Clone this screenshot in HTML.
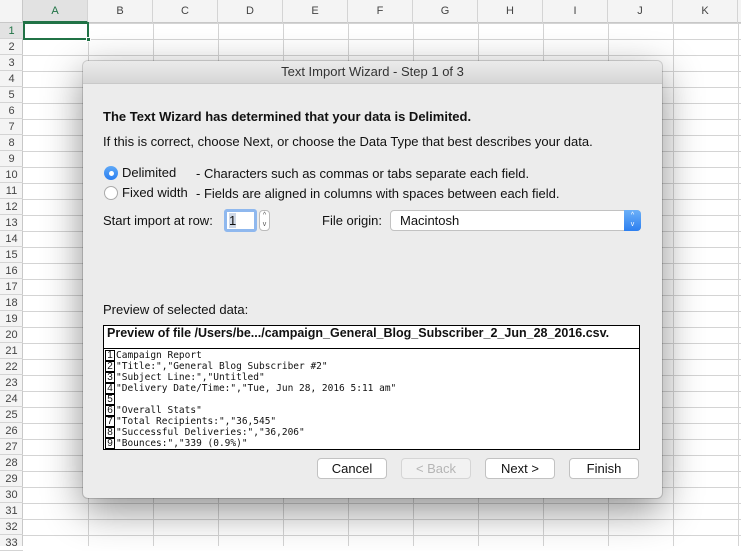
<!DOCTYPE html>
<html><head><style>
*{margin:0;padding:0;box-sizing:border-box}
body{width:741px;height:546px;overflow:hidden;background:#fff;font-family:"Liberation Sans",sans-serif;position:relative}
.grid{position:absolute;left:0;top:0;width:741px;height:546px;
background-image:repeating-linear-gradient(to right,transparent 0 64px,#d4d4d4 64px 65px),repeating-linear-gradient(to bottom,transparent 0 15px,#d4d4d4 15px 16px);
background-position:24px 0,0 8px;}
.hdr{position:absolute;left:0;top:0;width:741px;height:23px;background:#f4f4f4;border-bottom:1px solid #c8c8c8}
.rh{position:absolute;left:0;top:23px;width:23px;height:523px;background:#f4f4f4;border-right:1px solid #c8c8c8}
.col{position:absolute;top:0;height:23px;width:65px;text-align:center;font-size:11px;line-height:23px;color:#444;border-right:1px solid #d4d4d4}
.row{position:absolute;left:0;width:23px;height:16px;text-align:center;font-size:11px;line-height:16px;color:#444;border-bottom:1px solid #d4d4d4}
.dlg{position:absolute;left:83px;top:61px;width:579px;height:437px;background:#ececec;border-radius:5px;box-shadow:0 12px 40px rgba(0,0,0,.45),0 0 0 1px rgba(0,0,0,.15);font-size:13px;color:#111}
.tb{height:23px;border-bottom:1px solid #c9c9c9;background:linear-gradient(#ebebeb,#d6d6d6);border-radius:5px 5px 0 0;text-align:center;line-height:22px;font-size:13px;color:#333}
.a{position:absolute;white-space:nowrap}
.btn{position:absolute;top:397px;height:21px;width:70px;background:#fff;border:1px solid #c2c2c2;border-radius:4px;text-align:center;line-height:19px;font-size:13px}
.pv{position:absolute;left:20px;top:264px;width:537px;height:125px;background:#fff;border:1px solid #000;overflow:hidden}
.pl{font-family:"DejaVu Sans Mono","Liberation Mono",monospace;font-size:9.5px;height:11px;line-height:11px;white-space:nowrap}
.pl b{display:inline-block;border:1px solid #000;width:10px;height:11px;line-height:10px;font-weight:normal;text-align:center;margin-right:1px;font-family:"Liberation Sans",sans-serif;font-size:10px;vertical-align:top}
</style></head><body>
<div class="grid"></div>
<div class="hdr"></div>
<div class="rh"></div>
<div style="position:absolute;left:0;top:0;width:23px;height:23px;background:#f4f4f4;border-right:1px solid #c8c8c8;border-bottom:1px solid #c8c8c8"></div>
<div class="col" style="left:23px;color:#217346;background:#e2e2e2;border-bottom:2px solid #217346">A</div>
<div class="col" style="left:88px">B</div><div class="col" style="left:153px">C</div><div class="col" style="left:218px">D</div><div class="col" style="left:283px">E</div><div class="col" style="left:348px">F</div><div class="col" style="left:413px">G</div><div class="col" style="left:478px">H</div><div class="col" style="left:543px">I</div><div class="col" style="left:608px">J</div><div class="col" style="left:673px">K</div>
<div id="rows"></div>
<script>
var h='';for(var i=1;i<=33;i++){h+='<div class="row" style="top:'+(23+(i-1)*16)+'px;'+(i==1?'color:#217346;background:#e2e2e2;':'')+'">'+i+'</div>';}
document.getElementById('rows').innerHTML=h;
</script>
<div style="position:absolute;left:23px;top:22px;width:66px;height:18px;border:2px solid #217346"></div>
<div style="position:absolute;left:86px;top:37px;width:5px;height:5px;background:#217346;border:1px solid #fff"></div>

<div class="dlg">
<div class="tb">Text Import Wizard - Step 1 of 3</div>
<div class="a" style="left:20px;top:48px;font-weight:bold">The Text Wizard has determined that your data is Delimited.</div>
<div class="a" style="left:20px;top:73px">If this is correct, choose Next, or choose the Data Type that best describes your data.</div>
<div class="a" style="left:21px;top:105px;width:14px;height:14px;border-radius:50%;background:linear-gradient(#5fa8f7,#2a7ef0);"><div style="position:absolute;left:4.5px;top:4.5px;width:5px;height:5px;border-radius:50%;background:#fff"></div></div>
<div class="a" style="left:39px;top:104px">Delimited</div>
<div class="a" style="left:113px;top:105px">- Characters such as commas or tabs separate each field.</div>
<div class="a" style="left:21px;top:125px;width:14px;height:14px;border-radius:50%;background:#fff;border:1px solid #aaa"></div>
<div class="a" style="left:39px;top:124px">Fixed width</div>
<div class="a" style="left:113px;top:125px">- Fields are aligned in columns with spaces between each field.</div>
<div class="a" style="left:20px;top:152px">Start import at row:</div>
<div class="a" style="left:141px;top:148px;width:33px;height:23px;border:3px solid #8fb8ee;border-radius:3px;background:#fff;padding-left:2px;line-height:17px"><span style="background:#cfd8e6">1</span></div>
<div class="a" style="left:176px;top:149px;width:11px;height:21px;border:1px solid #bbb;border-radius:4px;background:#fff;font-size:7px;line-height:9px;text-align:center;color:#555">^<br>v</div>
<div class="a" style="left:239px;top:152px">File origin:</div>
<div class="a" style="left:307px;top:149px;width:251px;height:21px;border:1px solid #c2c2c2;border-radius:4px;background:#fff;padding-left:9px;line-height:19px">Macintosh
<div style="position:absolute;right:-1px;top:-1px;width:17px;height:21px;border-radius:0 4px 4px 0;background:linear-gradient(#6bb0f8,#2c7ff0);color:#fff;font-size:7px;line-height:9px;text-align:center;padding-top:1px">^<br>v</div></div>
<div class="a" style="left:20px;top:241px">Preview of selected data:</div>
<div class="pv">
<div style="height:23px;border-bottom:1px solid #000;font-weight:bold;font-size:12.5px;line-height:15px;padding-left:3px">Preview of file /Users/be.../campaign_General_Blog_Subscriber_2_Jun_28_2016.csv.</div>
<div style="padding-top:1px;padding-left:1px">
<div class="pl"><b>1</b>Campaign Report</div>
<div class="pl"><b>2</b>"Title:","General Blog Subscriber #2"</div>
<div class="pl"><b>3</b>"Subject Line:","Untitled"</div>
<div class="pl"><b>4</b>"Delivery Date/Time:","Tue, Jun 28, 2016 5:11 am"</div>
<div class="pl"><b>5</b></div>
<div class="pl"><b>6</b>"Overall Stats"</div>
<div class="pl"><b>7</b>"Total Recipients:","36,545"</div>
<div class="pl"><b>8</b>"Successful Deliveries:","36,206"</div>
<div class="pl"><b>9</b>"Bounces:","339 (0.9%)"</div>
</div></div>
<div class="btn" style="left:234px">Cancel</div>
<div class="btn" style="left:318px;color:#b5b5b5;background:#f2f2f2;border-color:#d5d5d5">&lt; Back</div>
<div class="btn" style="left:402px">Next &gt;</div>
<div class="btn" style="left:486px">Finish</div>
</div>
</body></html>
